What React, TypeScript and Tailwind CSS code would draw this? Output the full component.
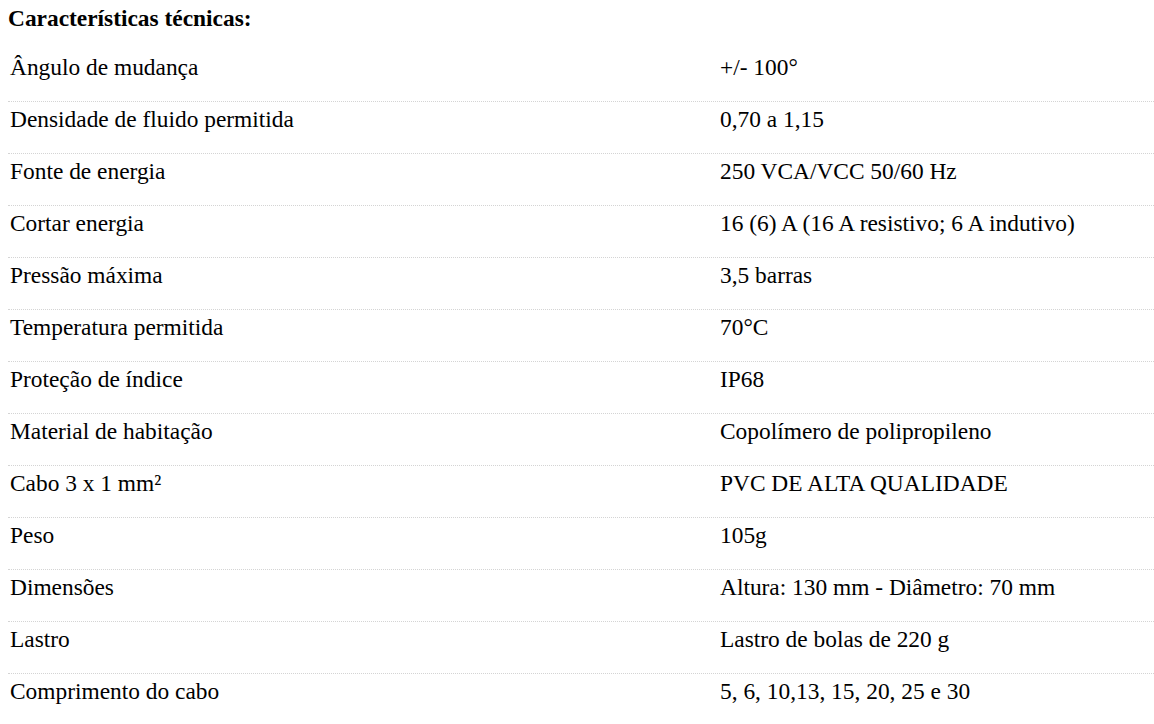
const specs: [string, string][] = [
  ['Ângulo de mudança', '+/- 100°'],
  ['Densidade de fluido permitida', '0,70 a 1,15'],
  ['Fonte de energia', '250 VCA/VCC 50/60 Hz'],
  ['Cortar energia', '16 (6) A (16 A resistivo; 6 A indutivo)'],
  ['Pressão máxima', '3,5 barras'],
  ['Temperatura permitida', '70°C'],
  ['Proteção de índice', 'IP68'],
  ['Material de habitação', 'Copolímero de polipropileno'],
  ['Cabo 3 x 1 mm²', 'PVC DE ALTA QUALIDADE'],
  ['Peso', '105g'],
  ['Dimensões', 'Altura: 130 mm - Diâmetro: 70 mm'],
  ['Lastro', 'Lastro de bolas de 220 g'],
  ['Comprimento do cabo', '5, 6, 10,13, 15, 20, 25 e 30'],
];

export default function App() {
  return (
    <div className="min-h-screen bg-white pl-2 text-black font-['Liberation_Serif','Times_New_Roman',serif] text-[23.4px] leading-[26px]">
      <h2 className="pt-[5px] pb-[19px] font-bold">Características técnicas:</h2>

      <div className="flex flex-col">
        {specs.map(([label, value], i) => (
          <div
            key={label}
            className={
              i === specs.length - 1
                ? 'grid grid-cols-[710px_1fr] pt-[4px] pb-[21px]'
                : 'grid grid-cols-[710px_1fr] pt-[4px] pb-[21px] border-b border-dotted border-[#d4d4d4]'
            }
          >
            <div className="pl-[2px]">{label}</div>
            <div className="pl-[2px]">{value}</div>
          </div>
        ))}
      </div>
    </div>
  );
}
